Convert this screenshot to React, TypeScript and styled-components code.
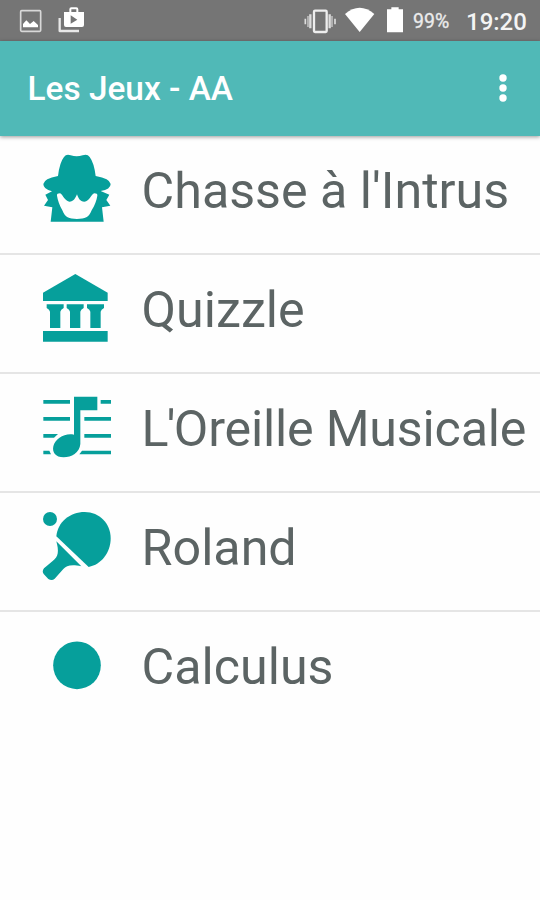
import React from 'react';
import styled, { createGlobalStyle } from 'styled-components';

const GlobalStyle = createGlobalStyle`
  * { box-sizing: border-box; }
  body { margin: 0; background: #fefefe; font-family: Roboto, sans-serif; }
`;

const Screen = styled.div`
  width: 540px;
  height: 900px;
  display: flex;
  flex-direction: column;
  overflow: hidden;
  background: #fefefe;
`;

const StatusBar = styled.div`
  height: 41px;
  flex: none;
  display: flex;
  align-items: flex-start;
  justify-content: space-between;
  background: #757575;
  color: #fff;
`;

const StatusGroup = styled.div`
  display: flex;
  height: 41px;
`;

const Battery = styled.span`
  width: 53px;
  font-size: 19.5px;
  line-height: 43px;
  color: #ececec;
  -webkit-text-stroke: 0.3px #ececec;
  white-space: nowrap;
`;

const Clock = styled.span`
  width: 74px;
  font-size: 24px;
  font-weight: 500;
  line-height: 44px;
  color: #f4f4f4;
  white-space: nowrap;
`;

const AppBar = styled.header`
  height: 94.5px;
  flex: none;
  display: flex;
  align-items: center;
  justify-content: space-between;
  padding: 0 27px 0 27.5px;
  background: #50b9b7;
  box-shadow: 0 1px 4px rgba(0, 0, 0, 0.4);
  z-index: 1;
`;

const Title = styled.h1`
  margin: 2px 0 0;
  font-size: 33.4px;
  line-height: 40px;
  font-weight: 500;
  color: #fff;
`;

const List = styled.ul`
  margin: 0;
  padding: 0;
  list-style: none;
`;

const Row = styled.li`
  height: 119.2px;
  display: flex;
  align-items: flex-start;
  padding: 10px 0 0 30px;
  border-bottom: 2px solid #e5e5e5;
  &:last-child { border-bottom: 0; }
`;

const GameIcon = styled.svg`
  flex: none;
  width: 100px;
  height: 90px;
  fill: #069f9b;
`;

const Label = styled.span<{ $tracking?: number }>`
  margin: 15px 0 0 11.6px;
  font-size: 50.2px;
  line-height: 59px;
  letter-spacing: ${({ $tracking = 0 }) => $tracking}px;
  color: #5c6464;
  white-space: nowrap;
`;

const Elision = styled.span`
  letter-spacing: -1.8px;
`;

const games = [
  {
    id: 'intrus',
    name: "Chasse à l'Intrus",
    top: 3,
    art: (
      <path
        fillRule="evenodd"
        d="M84 93Q89 52 102 36Q109 26 122 31Q140 37 158 31Q172 26 179 36Q192 53 197 93Q240 101 242 117Q242 133 212 138L238 149L229 165L241 182L216 187L221 230H62L67 187L42 182L54 165L46 149L66 139Q40 133 40 117Q42 101 84 93ZM81 152C83 166 89 182 97 196C106 218 116 222 141 222C166 222 176 218 185 196C194 182 200 166 202 152Q203 145 193 145C184 147 179 169 163 170C150 170 145 160 141 148C136 160 131 170 118 170C103 168 98 147 90 145Q80 145 81 152Z"
      />
    ),
  },
  {
    id: 'quizzle',
    name: 'Quizzle',
    top: 0,
    art: (
      <>
        <path d="M136 27L233 83V108H39V83Z" />
        <path d="M50 118H101V129Q92 134 91 140V189H60V140Q59 134 50 129ZM110 118H161V129Q152 134 151 140V189H120V140Q119 134 110 129ZM171 118H222V129Q213 134 212 140V189H181V140Q180 134 171 129Z" />
        <path d="M39 198H233V230H39Z" />
      </>
    ),
  },
  {
    id: 'oreille',
    elision: "L'",
    name: 'Oreille Musicale',
    top: -4,
    tracking: -0.18,
    art: (
      <>
        <path d="M40 44H120V55H40ZM212 44H243V55H212ZM40 95H120V106H40ZM163 95H243V106H163ZM40 146H84L72 157H40ZM163 146H243V157H163ZM40 196H58L63 207H40ZM156 196H243V207H148Z" />
        <path d="M132 34H202V75H151V176C149 202 124 216 101 216C76 216 66 201 70 183C76 159 105 142 132 148Z" />
      </>
    ),
  },
  {
    id: 'roland',
    name: 'Roland',
    top: 9,
    art: (
      <>
        <circle cx="60" cy="57" r="21" />
        <path d="M79 109C83 66 120 36 164 36C209 36 242 71 242 115C242 158 214 194 176 201Z" />
        <path d="M79 124L154 199C124 192 109 197 100 207L74 236Q66 244 55 237L41 222Q35 214 42 205L68 183C86 171 87 153 79 124Z" />
      </>
    ),
  },
  {
    id: 'calculus',
    name: 'Calculus',
    top: 66,
    art: <circle cx="141" cy="196" r="71.5" />,
  },
];

export default function App() {
  return (
    <>
      <GlobalStyle />
      <Screen>
        <StatusBar>
          <svg width="100" height="41" viewBox="0 0 300 123">
            <rect x="62" y="32" width="60" height="62" rx="3" fill="none" stroke="#d8d8d8" strokeWidth="5" />
            <path d="M69 82V72L79 61L90 72L101 63L114 75V82Z" fill="#fff" />
            <path d="M179 54V93H237" fill="none" stroke="#e8e8e8" strokeWidth="7" strokeLinejoin="round" />
            <path
              fill="#fff"
              fillRule="evenodd"
              d="M192 36H208V28Q208 22 214 22H229Q235 22 235 28V36H252V75Q252 81 246 81H198Q192 81 192 75ZM214 36H229V28H214ZM212 46V71L232 59Z"
            />
          </svg>
          <StatusGroup>
            <svg width="110" height="41" viewBox="39 0 330 123">
              <rect x="72" y="32" width="38" height="64" rx="3" fill="none" stroke="#eee" strokeWidth="7" />
              <path d="M61 43V85M119 43V85" stroke="#ddd" strokeWidth="7" />
              <path d="M54 48V81M126 48V81" stroke="#bbb" strokeWidth="5" />
              <path d="M46 56V73M135 56V73" stroke="#ddd" strokeWidth="5" />
              <path d="M165 42Q209 5 253 42L209 96Z" fill="#fff" />
              <path d="M291 28H304V22H326V28H339V97H291Z" fill="#fff" />
            </svg>
            <Battery>99%</Battery>
            <Clock>19:20</Clock>
          </StatusGroup>
        </StatusBar>
        <AppBar>
          <Title>Les Jeux - AA</Title>
          <svg width="20" height="40" viewBox="0 0 20 40" fill="#fff">
            <circle cx="10" cy="10" r="3.7" />
            <circle cx="10" cy="20" r="3.7" />
            <circle cx="10" cy="30" r="3.7" />
          </svg>
        </AppBar>
        <List>
          {games.map((game) => (
            <Row key={game.id}>
              <GameIcon viewBox={`0 ${game.top} 300 270`}>{game.art}</GameIcon>
              <Label $tracking={game.tracking}>
                {game.elision && <Elision>{game.elision}</Elision>}
                {game.name}
              </Label>
            </Row>
          ))}
        </List>
      </Screen>
    </>
  );
}
